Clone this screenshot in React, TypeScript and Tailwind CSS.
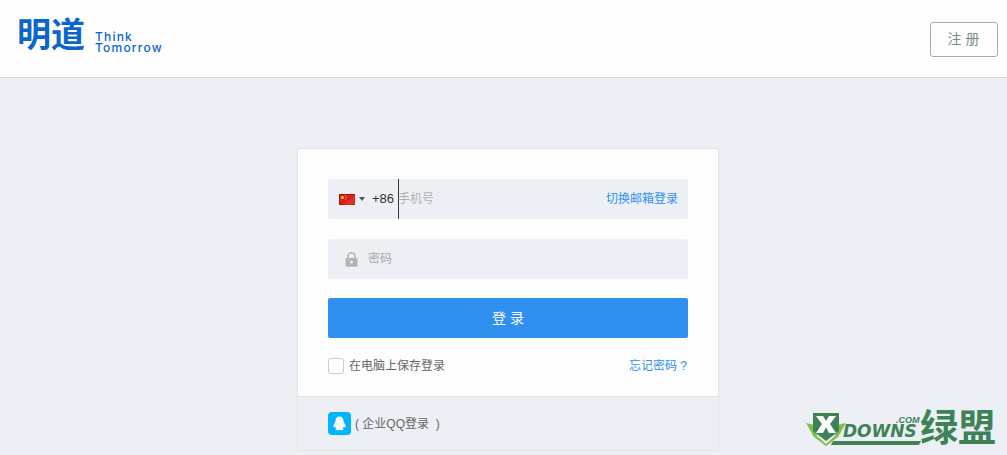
const cjk = "font-['Liberation_Sans','Noto_Sans_CJK_SC',sans-serif]"

function ChinaFlag() {
  return (
    <svg width="16" height="11" viewBox="0 0 16 11" className="shrink-0">
      <rect width="16" height="11" fill="#d81e1e" />
      <rect x="0.5" y="0.5" width="15" height="10" fill="none" stroke="#c00a0a" />
      <path d="M16 1 L4 11 H16 Z" fill="#e23a2e" opacity="0.6" />
      <circle cx="3.5" cy="3.5" r="1.5" fill="#f6d32d" />
      <circle cx="6.5" cy="1.8" r="0.5" fill="#f6d32d" />
      <circle cx="7.3" cy="3.3" r="0.5" fill="#f6d32d" />
      <circle cx="6.5" cy="5" r="0.5" fill="#f6d32d" />
    </svg>
  )
}

function LockIcon() {
  return (
    <svg width="13" height="15" viewBox="0 0 13 15">
      <path d="M3 6.5V4.3a3.5 3.5 0 0 1 7 0v2.2" fill="none" stroke="#b4b4b4" strokeWidth="1.6" />
      <rect x="0.5" y="6" width="12" height="8.8" rx="1.2" fill="#b4b4b4" />
      <circle cx="6.5" cy="10.2" r="1.4" fill="#eceff4" />
    </svg>
  )
}

function QQIcon() {
  return (
    <div className="flex h-[23px] w-[23px] items-center justify-center rounded-[4px] bg-[#00b4ff]">
      <svg width="15" height="15" viewBox="0 0 15 15">
        <path
          d="M7.5 0.5C4.8 0.5 3.6 2.6 3.5 5C3.4 6.2 2.6 7 2 8.3C1.3 9.8 1.2 11.2 1.8 11.4C2.2 11.5 2.7 11 3.1 10.4C3.3 11.3 3.8 12 4.4 12.5C3.6 12.9 3.2 13.3 3.5 13.8C3.9 14.4 6 14.4 7.5 13.7C9 14.4 11.1 14.4 11.5 13.8C11.8 13.3 11.4 12.9 10.6 12.5C11.2 12 11.7 11.3 11.9 10.4C12.3 11 12.8 11.5 13.2 11.4C13.8 11.2 13.7 9.8 13 8.3C12.4 7 11.6 6.2 11.5 5C11.4 2.6 10.2 0.5 7.5 0.5Z"
          fill="#ffffff"
        />
      </svg>
    </div>
  )
}

// site stamp in the bottom right corner, sits over the page
function Watermark() {
  return (
    <div className="absolute left-[806px] top-[408px] h-[40px] w-[192px] text-[#3f8257]">
      <svg width="40" height="34" viewBox="0 0 40 34" className="absolute left-0 top-[4px]">
        <path d="M0 11 L9 13 L11 24 L20 32 L29 24 L31 13 L40 11 L32 25 L20 34 L8 25 Z" fill="#7cc04a" />
        <path d="M7 1 H33 V19 L20 29 L7 19 Z" fill="#3f8257" />
        <path d="M10 4 H17 L20 9 L23 4 H30 L24 12 L30 21 H23 L20 15.5 L17 21 H10 L16 12 Z" fill="#ffffff" />
      </svg>
      <span className="absolute left-[90px] top-[8px] font-['Liberation_Sans',sans-serif] text-[9px] font-bold italic leading-[8px]">
        .COM
      </span>
      <span className="absolute left-[37px] top-[17px] font-['DejaVu_Sans',sans-serif] text-[17px] font-bold italic leading-[13px]">
        DOWNS
      </span>
      <div className="absolute left-[26px] top-[33px] h-[4px] w-[88px] -skew-x-[30deg] bg-[#3f8257]" />
      <span className={`absolute left-[114px] top-0 ${cjk} whitespace-nowrap text-[38px] font-bold leading-[40px]`}>
        绿盟
      </span>
    </div>
  )
}

export default function App() {
  return (
    <div className={`relative h-[455px] overflow-hidden bg-[#eceff4] ${cjk}`}>
      <header className="flex h-[78px] items-center justify-between border-b border-[#d9d9d9] bg-[#fdfdfd] pl-[17px] pr-[9px]">
        <div className="flex items-center">
          <span className="mt-[-8px] text-[34px] font-bold leading-none text-[#0a66c8]">明道</span>
          <div className="ml-[10px] mt-[6px] font-['Inter',sans-serif] text-[12px] font-medium leading-[11px] tracking-[1.2px] text-[#0a66c8]">
            <div>Think</div>
            <div>Tomorrow</div>
          </div>
        </div>
        <button className="mt-[1px] h-[35px] w-[68px] rounded-[3px] border border-[#aaaaaa] bg-[#fdfdfd] pl-[3px] text-[14px] tracking-[4px] text-[#7b8a8b]">
          注册
        </button>
      </header>

      <main className="ml-[297px] mt-[70px] w-[422px] overflow-hidden rounded-[3px] border border-[#e2e4e8] bg-[#fdfdfd]">
        <div className="px-[30px] pt-[30px]">
          <div className="flex h-[40px] items-center rounded-[3px] bg-[#eceff4] pl-[11px] pr-[10px] text-[12px]">
            <ChinaFlag />
            <div className="ml-[4px] h-0 w-0 border-x-[3.5px] border-t-[4px] border-x-transparent border-t-[#555555]" />
            <span className="ml-[7px] w-[26px] text-[13px] text-[#333333]">+86</span>
            <div className="h-[40px] w-px bg-[#333333]" />
            <span className="ml-[-1px] flex-1 text-[#b0b0b0]">手机号</span>
            <span className="text-[#2f90f0]">切换邮箱登录</span>
          </div>

          <div className="mt-[20px] flex h-[40px] items-center rounded-[3px] bg-[#eceff4] pl-[17px] text-[12px] text-[#a8a8a8]">
            <LockIcon />
            <span className="ml-[10px]">密码</span>
          </div>

          <button className="mt-[19px] h-[40px] w-full rounded-[2px] bg-[#2f90f0] pl-[4px] pt-[1px] text-[14px] tracking-[4px] text-white">
            登录
          </button>

          <div className="mt-[18px] flex h-[21px] items-center justify-between pb-[2px] text-[12px]">
            <label className="flex items-center text-[#666666]">
              <span className="h-[16px] w-[16px] rounded-[3px] border border-[#cccccc] bg-white" />
              <span className="ml-[5px]">在电脑上保存登录</span>
            </label>
            <span className="whitespace-pre pr-[1px] text-[#2f90f0]">忘记密码 ?</span>
          </div>
        </div>

        <div className="mt-[19px] flex h-[54px] items-center border-t border-[#dfe1e5] bg-[#eceff4] pl-[30px] text-[12px] text-[#666666]">
          <QQIcon />
          <span className="ml-[4px] whitespace-pre">( 企业QQ登录  )</span>
        </div>
      </main>

      <Watermark />
    </div>
  )
}
